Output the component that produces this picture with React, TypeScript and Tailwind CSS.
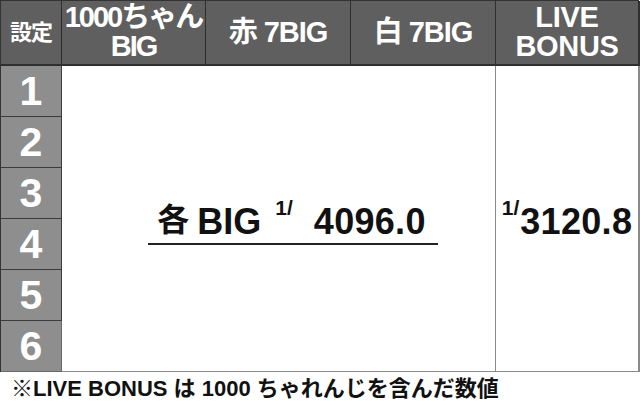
import React from "react";

const hdr =
  "bg-[#5f5f5f] border-r border-b-2 border-[#2f2f2f] flex items-center justify-center text-white font-bold text-center";

const rowNums = ["1", "2", "3", "4", "5", "6"];

export default function App() {
  return (
    <div className="w-[640px] h-[402px] bg-white font-['Liberation_Sans','Noto_Sans_CJK_JP',sans-serif] overflow-hidden">
      <div className="grid grid-cols-[61px_144px_145px_145px_144px] grid-rows-[65px_repeat(6,51px)] w-[639px] border-t border-l border-[#333]">
        <div className={hdr + " text-[22px] tracking-[-1px]"}>設定</div>
        <div className={hdr + " text-[29px] leading-[29px] tracking-[-2px] pb-[1px]"}>
          <div>
            1000ちゃん
            <br />
            BIG
          </div>
        </div>
        <div className={hdr + " text-[29px] tracking-[-1px] pt-[1px]"}>赤 7BIG</div>
        <div className={hdr + " text-[29px] tracking-[-1px] pt-[1px]"}>白 7BIG</div>
        <div className={hdr + " text-[29px] leading-[29px] tracking-[-0.3px] border-r-2 pb-[1px]"}>
          <div>
            LIVE
            <br />
            BONUS
          </div>
        </div>

        {rowNums.map((n, i) => (
          <div
            key={n}
            style={{ gridColumn: 1, gridRow: i + 2 }}
            className={
              "bg-[#8e8e8e] border-r border-b flex items-center justify-center text-white font-bold text-[41px] leading-none " +
              (i === 5 ? "border-[#6a6a6a]" : "border-[#3c3c3c]")
            }
          >
            {n}
          </div>
        ))}

        <div className="col-start-2 col-end-5 row-start-2 row-end-8 border-r border-b border-[#8a8a8a] flex items-center justify-center pl-[29px] pt-[4px] text-[#111]">
          <div className="flex flex-col">
            <div className="flex items-start pl-[9px] pr-[12px]">
              <span className="mt-[7px] text-[32px] leading-none font-bold">各</span>
              <span className="mt-[7px] ml-[8px] text-[36px] leading-none font-bold">BIG</span>
              <span className="ml-[14px] text-[21px] leading-none font-bold">1/</span>
              <span className="mt-[7px] ml-[21px] text-[36px] leading-none font-bold tracking-[0.3px]">4096.0</span>
            </div>
            <div className="mt-[3px] h-[2px] bg-[#222]"></div>
          </div>
        </div>

        <div className="col-start-5 col-end-6 row-start-2 row-end-8 border-r-2 border-b border-[#8a8a8a] flex items-center justify-center text-[#111]">
          <div className="flex items-start">
            <span className="text-[21px] leading-none font-bold">1/</span>
            <span className="mt-[7px] ml-[1px] text-[36px] leading-none font-bold tracking-[0.3px]">3120.8</span>
          </div>
        </div>
      </div>
      <div className="pl-[11px] pt-[6px] text-[22px] leading-none font-bold text-[#111] whitespace-nowrap">
        ※LIVE BONUS は 1000 ちゃれんじを含んだ数値
      </div>
    </div>
  );
}
